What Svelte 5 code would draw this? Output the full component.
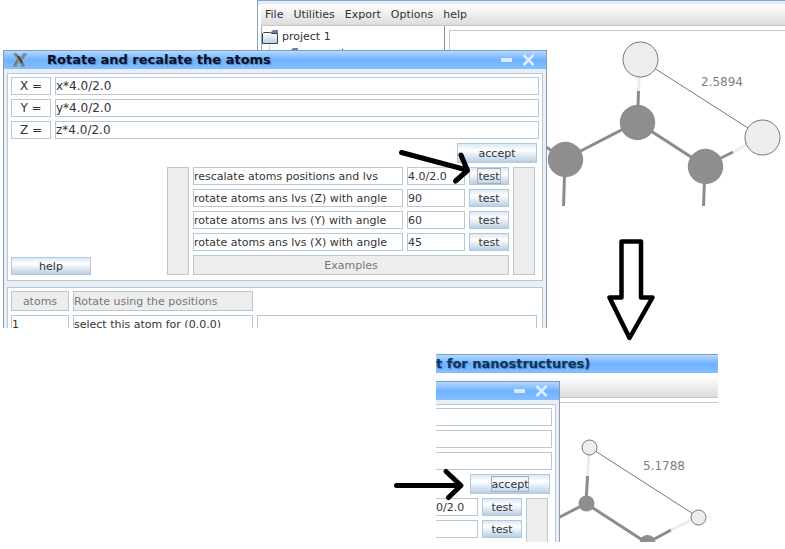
<script>
  const axes = ['X', 'Y', 'Z'];
  const menus = ['File', 'Utilities', 'Export', 'Options', 'help'];
  const examples = [
    { text: 'rescalate atoms positions and lvs', value: '4.0/2.0' },
    { text: 'rotate atoms ans lvs (Z) with angle', value: '90' },
    { text: 'rotate atoms ans lvs (Y) with angle', value: '60' },
    { text: 'rotate atoms ans lvs (X) with angle', value: '45' }
  ];
</script>

{#snippet controls()}
  <button class="control" aria-label="Minimize">
    <svg width="14" height="14" viewBox="0 0 14 14"><rect x="1" y="5" width="11" height="4" rx="1" fill="#d9ebff" /></svg>
  </button>
  <button class="control" aria-label="Close">
    <svg width="14" height="14" viewBox="0 0 14 14"><path d="M1.500 2l10 10M11.500 2L1.500 12" stroke="#dceeff" stroke-width="2.500" /></svg>
  </button>
{/snippet}

<main>
  <div class="window main-window">
    <nav>
      {#each menus as menu}<button>{menu}</button>{/each}
    </nav>
    <div class="work">
      <div class="tree">
        <div class="node">
          <svg width="17" height="14" viewBox="0 0 17 14">
            <defs><linearGradient id="folder" x2="0" y2="1"><stop stop-color="#fff" /><stop offset="1" stop-color="#b8cfe5" /></linearGradient></defs>
            <path d="M9 2l2-2h5v3H9z" fill="#6382a5" />
            <path d="M.5 13.500v-10l1-1h7l1 1h6v10z" fill="url(#folder)" stroke="#39434d" />
          </svg>
          <span>project 1</span>
        </div>
        <svg class="child" width="90" height="8" viewBox="0 0 90 8">
          <path d="M6.500 0v8" stroke="#b8cfe5" />
          <path d="M28 5l2-2h5v5h-9V5z" fill="#6382a5" />
          <path d="M79 4h1v1h-1z" fill="#333" />
        </svg>
      </div>
      <div class="canvas"></div>
    </div>
    <svg class="molecule" width="100%" height="100%">
      <g transform="translate(-257 0)">
        <g stroke="#8c8c8c" stroke-width="3">
          <path d="M546 147L565 159L637 122L705 166M565 159L563.500 207M705 166L703.500 207M637.500 122L638.500 91M705 166L733 152" fill="none" />
          <path d="M638.500 91L640 59M733 152L762 137" stroke="#ececec" />
        </g>
        <path d="M640 59L762 137" stroke="#777" />
        <g fill="#8e8e8e"><circle cx="637.500" cy="122.500" r="17.700" /><circle cx="565.500" cy="159.500" r="17.700" /><circle cx="705.500" cy="166.500" r="17.700" /></g>
        <g fill="#ededed" stroke="#777"><circle cx="640.500" cy="59.500" r="17.500" /><circle cx="762.500" cy="137.500" r="17.500" /></g>
        <text x="701" y="86">2.5894</text>
      </g>
    </svg>
  </div>

  <div class="first">
    <section class="dialog" aria-label="Rotate and recalate the atoms">
      <header class="titlebar">
        <svg class="logo" width="16" height="16" viewBox="0 0 16 16">
          <path d="M1 2l3-1 4 5 4-5 3 1-5 6 3 6-3 1-3-5-3 5-3-1 4-7z" fill="#66747a" />
          <path d="M2 2l9 12M13 2L3 14" stroke="#b3ac8d" stroke-width="1" />
          <path d="M6 4l4 7" stroke="#333b40" stroke-width="2" />
        </svg>
        <h1>Rotate and recalate the atoms</h1>
        {@render controls()}
      </header>
      <div class="panel form">
        {#each axes as axis}
          <div class="line">
            <label class="cell axis" for="axis-{axis}">{axis} =</label>
            <input class="cell grow formula" id="axis-{axis}" value="{axis.toLowerCase()}*4.0/2.0" />
          </div>
        {/each}
        <div class="accept-line">
          <button class="push accept"><span>accept</span></button>
        </div>
        <div class="lower">
          <button class="push help"><span>help</span></button>
          <div class="bar"></div>
          <div class="examples">
            {#each examples as ex, i}
              <label class="cell" for="example-{i}">{ex.text}</label>
              <input class="cell" id="example-{i}" value={ex.value} />
              <button class="push"><span class:focus={i === 0}>test</span></button>
            {/each}
            <div class="cell gray caption">Examples</div>
          </div>
          <div class="bar"></div>
        </div>
      </div>
      <div class="panel list">
        <div class="line">
          <div class="cell gray num">atoms</div>
          <div class="cell gray pos">Rotate using the positions</div>
        </div>
        <div class="line">
          <input class="cell num" aria-label="atom" value="1" />
          <input class="cell pos" aria-label="position" value="select this atom for (0.0.0)" />
          <input class="cell grow last" aria-label="selection" value="" />
        </div>
      </div>
    </section>
  </div>

  <div class="window second">
    <header class="titlebar behind"><h2>t for nanostructures)</h2></header>
    <nav></nav>
    <div class="work"><div class="canvas"></div></div>
    <svg class="molecule" width="100%" height="100%">
      <g transform="translate(-436 -354)">
        <g stroke="#8c8c8c" stroke-width="3">
          <path d="M558 518L586 503.500L647 543L671 530M586 503.500L587.500 476" fill="none" />
          <path d="M587.500 476L589.500 447M671 530L698 517" stroke="#ececec" />
        </g>
        <path d="M589 447L698 517" stroke="#777" />
        <g fill="#8e8e8e"><circle cx="586.500" cy="503.500" r="8" /><circle cx="647.500" cy="543" r="8" /></g>
        <g fill="#ededed" stroke="#777"><circle cx="589.500" cy="447.500" r="7.500" /><circle cx="698.500" cy="517.500" r="7.500" /></g>
        <text x="643" y="470">5.1788</text>
      </g>
    </svg>
    <section class="dialog nested" aria-label="Applied transformation">
      <header class="titlebar">{@render controls()}</header>
      <div class="panel form">
        {#each axes as axis}
          <input class="cell" aria-label="{axis} formula" value="" />
        {/each}
        <div class="accept-line">
          <button class="push accept"><span class="focus">accept</span></button>
        </div>
        <div class="lower">
          <div class="examples short">
            <input class="cell tail" aria-label="scale" value="0/2.0" />
            <button class="push"><span>test</span></button>
            <input class="cell tail" aria-label="angle" value="" />
            <button class="push"><span>test</span></button>
          </div>
          <div class="bar"></div>
        </div>
      </div>
    </section>
  </div>

  <svg class="arrows" width="785" height="549" fill="none" stroke="#000" stroke-width="5" stroke-linecap="round" stroke-linejoin="round">
    <path d="M401.500 152.500L467 170M461 155L467.500 170.500L455.500 181" />
    <path d="M396.500 485.500H460M446 471.500L461 485.500L448.500 497.500" />
    <path d="M621.500 241.500H641V297.500H652.500L629.500 338L609.500 297.500H621.500Z" stroke-width="4.500" />
  </svg>
</main>

<style>
  :global(body) { margin: 0; background: #fff; }
  main {
    position: relative;
    min-height: 549px;
    overflow: hidden;
    font: 11px/16px "DejaVu Sans", sans-serif;
    color: #333;
  }
  main * { box-sizing: border-box; }
  button, input { font: inherit; color: inherit; margin: 0; }
  h1, h2 { margin: 0; font-size: 13px; line-height: 20px; white-space: nowrap; }

  .window, .first { position: absolute; overflow: hidden; }
  .main-window {
    left: 257px; right: 0; top: 0; height: 207px;
    border-top: 1px solid #86a9cc;
    border-left: 1px solid #8fa3b8;
    padding: 3px 0 0 3px;
    background: linear-gradient(#e4eefa, #e4eefa) 0 0 / 100% 4px no-repeat, #fff;
  }
  .first { left: 3px; top: 50px; width: 544px; height: 278px; }
  .second { left: 436px; top: 354px; width: 282px; height: 188px; background: #fff; }

  nav {
    display: flex;
    align-items: center;
    gap: 10px;
    height: 22px;
    padding-left: 4px;
    border-bottom: 1px solid #c4c4c4;
    background: linear-gradient(#fff, #dcdcdc);
  }
  nav button { border: 0; padding: 0; background: none; }
  .work { display: flex; height: 190px; }
  .tree { width: 184px; border-right: 1px solid #8795a3; border-left: 1px solid #9aa9b8; padding-top: 3px; }
  .node { display: flex; align-items: center; gap: 3px; }
  .child { display: block; margin-left: 1px; }
  .canvas { flex: 1; margin: 4px 0 0 4px; border: 1px solid #bccbd6; border-width: 1px 0 0 1px; }
  .second .canvas { margin-left: 0; }
  .molecule { position: absolute; left: -1px; top: -1px; }
  .second .molecule { left: 0; top: 0; }
  .molecule text { font-size: 12px; fill: #808080; }
  .arrows { position: absolute; left: 0; top: 0; pointer-events: none; }

  .titlebar {
    display: flex;
    align-items: center;
    justify-content: flex-end;
    height: 19px;
    border-top: 1px solid #7f9fbf;
    background: linear-gradient(#b5d8ff, #6fb2ff 50%, #84bfff);
    color: #03112d;
    text-shadow: 1px 1px 1px #5684b8;
  }
  .titlebar.behind { justify-content: flex-start; color: #073461; margin-bottom: 3px; }
  .dialog {
    display: flex;
    flex-direction: column;
    border: 1px solid #8b9bae;
    border-top: 0;
    background: #e9eff5;
  }
  .dialog .titlebar { padding: 0 10px 0 8px; gap: 8px; margin-bottom: 4px; }
  .dialog h1 { flex: 1; padding-left: 11px; }
  .control { display: flex; border: 0; padding: 0; background: none; }

  .panel {
    display: flex;
    flex-direction: column;
    gap: 4px;
    margin: 0 3px;
    padding: 3px;
    border: 1px solid #b8c9d6;
    background: #fff;
  }
  .form { padding-bottom: 5px; }
  .list { margin-top: 6px; }
  .line { display: flex; gap: 4px; }
  .cell {
    display: block;
    min-width: 0;
    height: 18px;
    padding: 1px 0 0;
    border: 1px solid #b8c9d6;
    border-radius: 0;
    background: #fff;
    white-space: nowrap;
    outline: 0;
  }
  .axis { width: 40px; text-align: center; }
  .axis, .formula { font-size: 12px; padding-top: 0; }
  .grow { flex: 1; }
  .gray { height: 20px; line-height: 18px; background: #ededed; color: #777; }
  .num { width: 58px; }
  .num.gray { text-align: center; }
  .pos { width: 180px; }
  .last { margin-right: 2px; }
  .accept-line { display: flex; justify-content: flex-end; padding-right: 2px; }
  .lower { display: flex; gap: 4px; padding-right: 4px; }
  .push {
    display: flex;
    align-items: center;
    justify-content: center;
    height: 18px;
    padding: 0;
    border: 1px solid #b3c7d9;
    border-radius: 0;
    background: linear-gradient(#dce8f3, #fff 35%, #b8cfe5);
  }
  .push span { height: 16px; padding: 0 1px; line-height: 17px; }
  .focus { box-shadow: inset 0 0 0 1px #9ab4cc; }
  .accept { width: 80px; height: 20px; }
  .help { width: 80px; align-self: flex-end; margin-right: auto; }
  .bar { width: 22px; border: 1px solid #b8c9d6; background: #ededed; }
  .examples { display: grid; grid-template-columns: 210px 58px 40px; gap: 4px; }
  .caption { grid-column: 1 / -1; text-align: center; }

  .nested { position: absolute; left: 0; top: 27px; width: 124px; height: 170px; border-left: 0; }
  .nested .panel { flex: 1; margin-left: 0; padding-left: 0; border-left: 0; }
  .nested .cell { border-left: 0; }
  .nested .lower { flex: 1; }
  .short { flex: 1; grid-template-columns: 1fr 40px; align-content: start; }
</style>
